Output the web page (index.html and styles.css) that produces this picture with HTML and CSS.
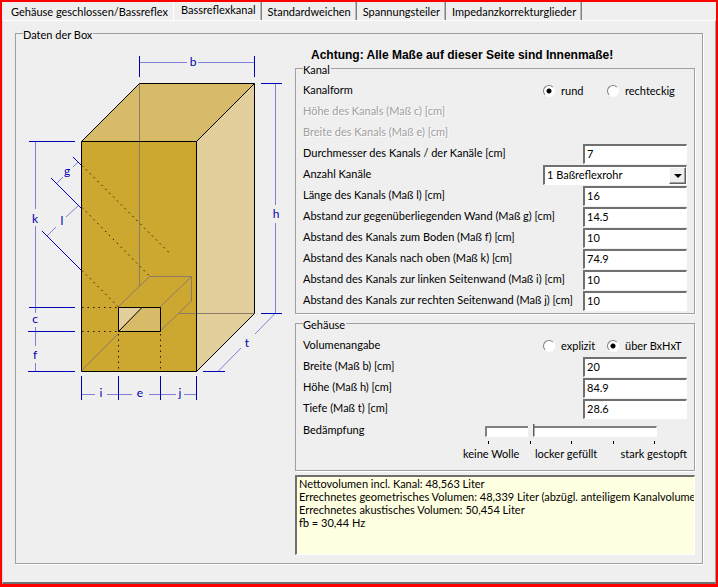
FILE: index.html
```html
<!DOCTYPE html>
<html lang="de">
<head>
    <meta charset="UTF-8">
    <title>Bassreflexkanal</title>
    <link rel="stylesheet" href="styles.css">
</head>
<body>
    <div class="tabs" role="tablist">
        <button class="tab" role="tab">Gehäuse geschlossen/Bassreflex</button>
        <button class="tab active" role="tab" aria-selected="true">Bassreflexkanal</button>
        <button class="tab" role="tab">Standardweichen</button>
        <button class="tab" role="tab">Spannungsteiler</button>
        <button class="tab" role="tab">Impedanzkorrekturglieder</button>
    </div>
    <main class="panel">
        <fieldset class="group box-data">
            <legend>Daten der Box</legend>
            <div class="columns">
                <svg class="drawing" width="272" height="355" viewBox="23 50 272 355">
                    <!-- Gehäuse -->
                    <g shape-rendering="crispEdges">
                        <path class="top" d="M139 83H254L196 141H81Z"/>
                        <path class="side" d="M254 83V313L196 371V141Z"/>
                        <path class="front" d="M81 141H196V371H81Z"/>
                    </g>
                    <path class="hidden-edge" d="M139.500 83V286M81 371L118 334M118 307L149.500 276.500H191.500V301L160 331M160 307L191.500 276.500M178 313.500H254"/>
                    <!-- Kanalöffnung -->
                    <path class="top" d="M118 307H160V331H118Z"/>
                    <path class="side" d="M118 307H142L118 331Z"/>
                    <path class="edge" d="M118.500 331.500L142 307.500M118.500 307.500H160.500V331.500H118.500Z"/>
                    <path class="edge" d="M81.500 141.500H196.500V371.500H81.500ZM81.500 141.500L139.500 83.500H254.500V313.500L196.500 371.500M196.500 141.500L254.500 83.500"/>
                    <path class="dots" d="M82 165.500L171 254.500M82 207.500L149 275.500M82 270.500L118 306.500M82 307.500H118M82 331.500H118M118.500 334V371M160.500 334V371"/>
                    <!-- Maßlinien -->
                    <path class="dim" d="M139.500 62.500H187M198 62.500H254M275.500 83V205M275.500 223V313M35.500 141V209M35.500 226V307M35.500 307V313M35.500 327V346M35.500 363V371M81 394.500H95M107 394.500H132M149 394.500H176M184 394.500H196M275 313.500L255 334M241 348L218 371.500M78 162L73 167M63 177L57 183M79 205L66 217M56 227L47 236"/>
                    <path class="tick" d="M139.500 56V77M254.500 56V77M261 83.500H282M261 313.500H282M203 371.500H225M29 141.500H75M29 307.500H75M28 331.500H75M28 371.500H75M81.500 376V400M118.500 376V400M160.500 376V400M196.500 376V400M73 157L81 165M51 178L81 208M42 231L81 270"/>
                    <g class="dim-text">
                        <text x="193" y="66">b</text>
                        <text x="276" y="218">h</text>
                        <text x="67" y="175">g</text>
                        <text x="35" y="223">k</text>
                        <text x="62" y="225">l</text>
                        <text x="35" y="323">c</text>
                        <text x="35" y="359">f</text>
                        <text x="101" y="397">i</text>
                        <text x="140" y="397">e</text>
                        <text x="180" y="397">j</text>
                        <text x="247" y="347">t</text>
                    </g>
                </svg>

                <div class="settings">
                    <p class="notice">Achtung: Alle Maße auf dieser Seite sind Innenmaße!</p>

                    <fieldset class="group">
                        <legend>Kanal</legend>
                        <div class="row">
                            <span>Kanalform</span>
                            <div class="choices">
                                <label><input type="radio" name="form" checked>rund</label>
                                <label><input type="radio" name="form">rechteckig</label>
                            </div>
                        </div>
                        <div class="row disabled"><span>Höhe des Kanals (Maß c) [cm]</span></div>
                        <div class="row disabled"><span>Breite des Kanals (Maß e) [cm]</span></div>
                        <div class="row">
                            <label for="durchmesser">Durchmesser des Kanals / der Kanäle [cm]</label>
                            <input class="field" type="text" id="durchmesser" value="7">
                        </div>
                        <div class="row">
                            <label for="anzahl">Anzahl Kanäle</label>
                            <div class="dropdown">
                                <select id="anzahl">
                                    <option>1 Baßreflexrohr</option>
                                </select>
                                <span class="arrow"></span>
                            </div>
                        </div>
                        <div class="row">
                            <label for="laenge">Länge des Kanals (Maß l) [cm]</label>
                            <input class="field" type="text" id="laenge" value="16">
                        </div>
                        <div class="row">
                            <label for="wand">Abstand zur gegenüberliegenden Wand (Maß g) [cm]</label>
                            <input class="field" type="text" id="wand" value="14.5">
                        </div>
                        <div class="row">
                            <label for="boden">Abstand des Kanals zum Boden (Maß f) [cm]</label>
                            <input class="field" type="text" id="boden" value="10">
                        </div>
                        <div class="row">
                            <label for="oben">Abstand des Kanals nach oben (Maß k) [cm]</label>
                            <input class="field" type="text" id="oben" value="74.9">
                        </div>
                        <div class="row">
                            <label for="links">Abstand des Kanals zur linken Seitenwand (Maß i) [cm]</label>
                            <input class="field" type="text" id="links" value="10">
                        </div>
                        <div class="row">
                            <label for="rechts">Abstand des Kanals zur rechten Seitenwand (Maß j) [cm]</label>
                            <input class="field" type="text" id="rechts" value="10">
                        </div>
                    </fieldset>

                    <fieldset class="group">
                        <legend>Gehäuse</legend>
                        <div class="row">
                            <span>Volumenangabe</span>
                            <div class="choices">
                                <label><input type="radio" name="volumen">explizit</label>
                                <label><input type="radio" name="volumen" checked>über BxHxT</label>
                            </div>
                        </div>
                        <div class="row">
                            <label for="breite">Breite (Maß b) [cm]</label>
                            <input class="field" type="text" id="breite" value="20">
                        </div>
                        <div class="row">
                            <label for="hoehe">Höhe (Maß h) [cm]</label>
                            <input class="field" type="text" id="hoehe" value="84.9">
                        </div>
                        <div class="row">
                            <label for="tiefe">Tiefe (Maß t) [cm]</label>
                            <input class="field" type="text" id="tiefe" value="28.6">
                        </div>
                        <div class="row slider-row">
                            <label for="daempfung">Bedämpfung</label>
                            <div class="damping">
                                <input class="slider" type="range" id="daempfung" min="0" max="4" value="1">
                                <div class="ticks"><i></i><i></i><i></i><i></i><i></i></div>
                                <div class="scale">
                                    <span>keine Wolle</span>
                                    <span>locker gefüllt</span>
                                    <span>stark gestopft</span>
                                </div>
                            </div>
                        </div>
                    </fieldset>

                    <textarea class="result" aria-label="Ergebnis" wrap="off" readonly>Nettovolumen incl. Kanal: 48,563 Liter
Errechnetes geometrisches Volumen: 48,339 Liter (abzügl. anteiligem Kanalvolumen
Errechnetes akustisches Volumen: 50,454 Liter
fb = 30,44 Hz</textarea>
                </div>
            </div>
        </fieldset>
    </main>
</body>
</html>
```

FILE: styles.css
```css
* {
    box-sizing: border-box;
}

body {
    margin: 0;
    min-height: 100vh;
    display: flex;
    flex-direction: column;
    border: 2px solid #ff0000;
    border-bottom-width: 3px;
    background: #efefef;
    color: #000;
    font-family: Lato, "Liberation Sans", Arial, sans-serif;
    font-size: 11px;
    line-height: 13px;
}

input, select, textarea, button {
    font: inherit;
    color: inherit;
    margin: 0;
}

/* Reiter */
.tabs {
    display: flex;
    height: 18px;
    padding-left: 3px;
}

.tab {
    border: 0;
    border-right: 1px solid #808080;
    box-shadow: inset -1px 0 #b8b8b8;
    padding: 0 5px 0 6px;
    background: #efefef;
    white-space: nowrap;
}

.tab:first-child {
    border-right: 1px solid #fff;
    box-shadow: none;
}

.tab.active {
    padding-left: 7px;
    padding-bottom: 4px;
}

.panel {
    flex: 1;
    padding: 4px 12px 18px;
    border-top: 1px solid #fff;
    border-left: 1px solid #d8d8d8;
    border-right: 1px solid #a0a0a0;
    border-bottom: 2px solid #707070;
}

/* Gruppenrahmen */
.group {
    margin: 0;
    padding: 4px 7px 2px;
    min-width: 0;
    border: 1px solid #a0a0a0;
    box-shadow: 1px 1px #fff;
}

.group legend {
    padding: 3px 1px 0 0;
    background: #efefef;
}

.box-data {
    padding: 0 7px 8px 7px;
}

.columns {
    display: flex;
}

.drawing {
    flex: none;
    margin-top: 9px;
}

.settings {
    flex: 1;
    min-width: 0;
    display: flex;
    flex-direction: column;
}

.notice {
    margin: 8px 0 -2px 16px;
    font-family: "Liberation Sans", Arial, sans-serif;
    font-size: 12px;
    font-weight: bold;
}

.settings .group + .group {
    margin-top: 1px;
}

.row {
    display: flex;
    justify-content: space-between;
    align-items: center;
    height: 21px;
}

.row > label, .row > span {
    padding-bottom: 2px;
}

.row.disabled {
    color: #a0a0a0;
    text-shadow: 1px 1px #fff;
}

.field {
    width: 104px;
    height: 20px;
    padding: 0 2px 1px;
    border: 1px solid #fff;
    border-top: 2px solid #707070;
    border-left: 2px solid #707070;
    background: #fff;
}

.choices {
    width: 144px;
    display: grid;
    grid-template-columns: 64px 1fr;
}

.choices label {
    display: flex;
    align-items: center;
    gap: 6px;
    white-space: nowrap;
}

.choices input {
    appearance: none;
    width: 12px;
    height: 12px;
    border: 1px solid #808080;
    border-right-color: #fff;
    border-bottom-color: #fff;
    border-radius: 50%;
    background: #fff;
}

.choices input:checked {
    background: radial-gradient(circle, #000 2px, #fff 3px);
}

.dropdown {
    position: relative;
    width: 144px;
}

.dropdown select {
    display: block;
    width: 100%;
    height: 20px;
    padding: 0 18px 1px 2px;
    appearance: none;
    border: 1px solid #fff;
    border-top: 2px solid #707070;
    border-left: 2px solid #707070;
    border-radius: 0;
    background: #fff;
}

.dropdown .arrow {
    position: absolute;
    top: 2px;
    right: 1px;
    width: 17px;
    height: 17px;
    border: 1px solid #fff;
    border-right-color: #606060;
    border-bottom-color: #606060;
    box-shadow: inset -1px -1px #a0a0a0;
    background: #efefef;
    pointer-events: none;
}

.dropdown .arrow::after {
    content: "";
    position: absolute;
    top: 6px;
    left: 4px;
    border: 4px solid transparent;
    border-top-color: #000;
    border-bottom: 0;
}

/* Schieberegler */
.slider-row {
    height: 49px;
    align-items: flex-start;
}

.slider-row label {
    padding-top: 4px;
}

.damping {
    width: 224px;
    padding-top: 4px;
}

.slider {
    display: block;
    appearance: none;
    width: 172px;
    height: 16px;
    margin-left: 22px;
    background: transparent;
}

.slider::-webkit-slider-runnable-track {
    height: 11px;
    border: 1px solid #fff;
    border-top: 2px solid #808080;
    border-left: 2px solid #808080;
    background: #fff;
}

.slider::-webkit-slider-thumb {
    appearance: none;
    width: 7px;
    height: 16px;
    margin-top: -4px;
    background: linear-gradient(90deg, #efefef 5px, #606060 5px);
    clip-path: polygon(0 0, 100% 0, 100% 75%, 50% 100%, 0 75%);
}

.ticks {
    display: flex;
    justify-content: space-between;
    width: 167px;
    margin: 2px 0 0 25px;
}

.ticks i {
    width: 1px;
    height: 3px;
    background: #000;
}

.scale {
    display: grid;
    grid-template-columns: 72px 1fr auto;
    padding-top: 3px;
    white-space: nowrap;
}

/* Ergebnis */
.result {
    display: block;
    height: 80px;
    margin-top: 4px;
    padding: 0 2px;
    border: 1px solid #fff;
    border-top: 2px solid #707070;
    border-left: 2px solid #707070;
    background: #ffffe1;
    overflow: hidden;
    resize: none;
}

/* Zeichnung */
.front {
    fill: #cca830;
}

.top {
    fill: #d7bb69;
}

.side {
    fill: #e2cf9c;
}

.edge, .hidden-edge, .dots, .dim, .tick {
    fill: none;
    stroke-width: 1px;
}

.edge {
    stroke: #000;
}

.hidden-edge {
    stroke: #8c7b68;
}

.dots {
    stroke: #201010;
    stroke-dasharray: 1.5 4;
}

.dim {
    stroke: #8080d8;
}

.tick {
    stroke: #0000b0;
}

.dim-text {
    fill: #0000b0;
    font-size: 12px;
    text-anchor: middle;
}
```
